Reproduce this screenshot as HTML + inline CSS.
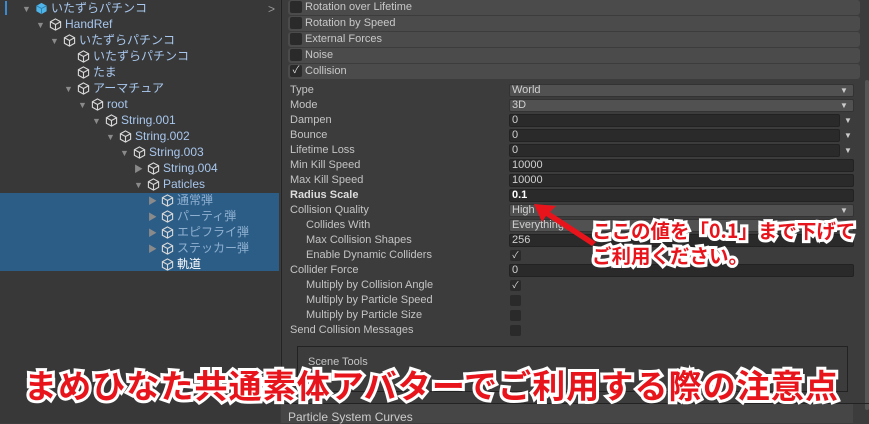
<!DOCTYPE html><html><head><meta charset="utf-8"><style>
*{margin:0;padding:0;box-sizing:border-box}
body{width:869px;height:423px;overflow:hidden;background:#3c3c3c;font-family:"Liberation Sans","Noto Sans CJK JP",sans-serif;position:relative;font-size:11px;color:#c4c4c4}
#left{position:absolute;left:0;top:0;width:280px;height:423px;background:#383838}
.tr{position:absolute;height:16px;line-height:16px;color:#a8c7ee;font-size:12px;white-space:nowrap}
.tr svg{vertical-align:-3px;margin-right:3px;margin-left:1px}
.ar{display:inline-block;width:12px;color:#8a8a8a;font-size:9px}
#sel{position:absolute;left:0;top:193px;width:279px;height:78px;background:#2c5d87}
#right{position:absolute;left:281px;top:0;width:588px;height:423px;background:#3c3c3c;border-left:1px solid #232323}
.mh{position:absolute;left:6px;width:572px;height:15px;background:#4b4b4b;border-radius:3px;color:#c8c8c8;line-height:15px;padding-left:17px}
.mh b{position:absolute;left:2px;top:1px;width:12px;height:12px;background:#2a2a2a;border-radius:2px;font-weight:normal;color:#ddd;font-size:10px;line-height:12px;text-align:center}
.lb{position:absolute;left:10px;height:15px;line-height:15px}
.f{position:absolute;left:229px;height:13px;background:#2a2a2a;border:1px solid #222;border-radius:2px;line-height:11px;padding-left:2px;color:#d0d0d0}
.dd{background:#515151;border-color:#333}
.cb{position:absolute;left:229px;width:11px;height:11px;background:#2a2a2a;border-radius:2px;color:#ddd;font-size:9px;line-height:11px;text-align:center}
.tri{position:absolute;font-size:8px;color:#ccc}
.cap{position:absolute;color:#e8141c;paint-order:stroke fill;-webkit-text-stroke:6px #fff;font-weight:bold;white-space:nowrap;font-family:"Noto Sans CJK JP",sans-serif}
</style></head><body>
<div id="left">
<div style="position:absolute;left:5px;top:1px;width:2px;height:14px;background:#3a8ad0"></div>
<div id="sel"></div>
<div style="position:absolute;left:268px;top:2px;color:#999;font-size:12px">&gt;</div>
</div>
<div id="tree"></div>
<div id="right">
<div class="mh" style="top:0">Rotation over Lifetime<b></b></div>
<div class="mh" style="top:16px">Rotation by Speed<b></b></div>
<div class="mh" style="top:32px">External Forces<b></b></div>
<div class="mh" style="top:48px">Noise<b></b></div>
<div class="mh" style="top:64px">Collision<b>✓</b></div>
<div style="position:absolute;left:583px;top:80px;width:4px;height:330px;background:#555;border-radius:2px"></div>
</div>
<div id="rows"></div>
<div style="position:absolute;left:297px;top:346px;width:551px;height:46px;border:1px solid #222;"></div>
<div style="position:absolute;left:308px;top:356px;color:#c4c4c4">Scene Tools</div>
<div style="position:absolute;left:281px;top:403px;width:588px;height:1px;background:#222"></div>
<div style="position:absolute;left:281px;top:404px;width:572px;height:19px;background:#464646"></div>
<div style="position:absolute;left:288px;top:410px;color:#ccc;font-size:12px">Particle System Curves</div>
<svg style="position:absolute;left:0;top:0" width="869" height="423"><polygon points="534,204 556,206 550,212 596,242 592,246 546,216 542,222" fill="#e8141c"/></svg>
<div class="cap" style="left:592px;top:217px;font-size:19.5px;line-height:25px">ここの値を「0.1」まで下げて<br>ご利用ください。</div>
<div class="cap" style="left:24px;top:362px;font-size:33px;line-height:44px;letter-spacing:1.1px">まめひなた共通素体アバターでご利用する際の注意点</div>
<script>
var cube='<svg width="13" height="13" viewBox="0 0 14 14"><path d="M7 1L12.5 4v6L7 13 1.5 10V4z M1.5 4L7 7l5.5-3 M7 7v6" fill="none" stroke="#d8d8d8" stroke-width="1.2"/></svg>';
var cubeB='<svg width="13" height="13" viewBox="0 0 14 14"><path d="M7 1L12.5 4v6L7 13 1.5 10V4z" fill="#4fb5e8"/><path d="M1.5 4L7 7l5.5-3 M7 7v6" fill="none" stroke="#2c7fb0" stroke-width="1"/></svg>';
var t=[[22,'▼','いたずらパチンコ',1],[36,'▼','HandRef'],[50,'▼','いたずらパチンコ'],[64,'','いたずらパチンコ'],[64,'','たま'],[64,'▼','アーマチュア'],[78,'▼','root'],[92,'▼','String.001'],[106,'▼','String.002'],[120,'▼','String.003'],[134,'▶','String.004'],[134,'▼','Paticles'],[148,'▶','通常弾',2],[148,'▶','パーティ弾',2],[148,'▶','エピフライ弾',2],[148,'▶','ステッカー弾',2],[148,'','軌道',3]];
var h='';t.forEach(function(r,i){var c=r[3]==2?'#8fb0d0':r[3]==3?'#fff':'#a8c7ee';h+='<div class="tr" style="left:'+r[0]+'px;top:'+i*16+'px;color:'+c+'"><span class="ar">'+r[1]+'</span>'+(r[3]==1?cubeB:cube)+r[2]+'</div>';});
document.getElementById('tree').innerHTML=h;
var R=[['Type','World','d'],['Mode','3D','d'],['Dampen','0','c'],['Bounce','0','c'],['Lifetime Loss','0','c'],['Min Kill Speed','10000'],['Max Kill Speed','10000'],['Radius Scale','0.1','b'],['Collision Quality','High','d'],['  Collides With','Everything','d'],['  Max Collision Shapes','256'],['  Enable Dynamic Colliders','✓','k'],['Collider Force','0'],['  Multiply by Collision Angle','✓','k'],['  Multiply by Particle Speed','','k'],['  Multiply by Particle Size','','k'],['Send Collision Messages','','k']];
var g='';R.forEach(function(r,i){var y=83+i*15;var ind=r[0].indexOf('  ')==0;var L=ind?306:290;
g+='<div class="lb" style="left:'+L+'px;top:'+y+'px;'+(r[2]=='b'?'font-weight:bold;color:#ddd':'')+'">'+r[0].trim()+'</div>';
if(r[2]=='k'){g+='<div class="cb" style="left:510px;top:'+(y+2)+'px">'+r[1]+'</div>';}
else{var w=r[2]=='c'?331:345;g+='<div class="f'+(r[2]=='d'?' dd':'')+'" style="left:509px;top:'+(y+1)+'px;width:'+w+'px;'+(r[2]=='b'?'font-weight:bold;color:#fff':'')+'">'+r[1]+'</div>';
if(r[2]=='d')g+='<div class="tri" style="left:840px;top:'+(y+3)+'px">▼</div>';
if(r[2]=='c')g+='<div class="tri" style="left:844px;top:'+(y+3)+'px">▼</div>';}});
document.getElementById('rows').innerHTML=g;
</script>
</body></html>
